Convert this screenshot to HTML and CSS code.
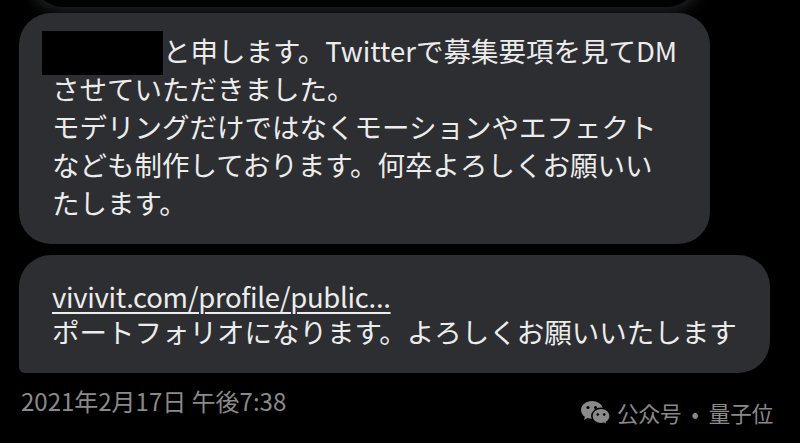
FILE: index.html
```html
<!DOCTYPE html>
<html lang="ja">
<head>
    <meta charset="UTF-8">
    <meta name="viewport" content="width=device-width, initial-scale=1.0">
    <title>DM</title>
    <link rel="stylesheet" href="styles.css">
</head>
<body>

    <div class="chat">
        <!-- tail of the previous message -->
        <div class="prev-bubble"></div>

        <div class="bubble bubble-first">
            <span class="redacted"></span>と申します。Twitterで募集要項を見てDM<br>
            させていただきました。<br>
            モデリングだけではなくモーションやエフェクト<br>
            なども制作しております。何卒よろしくお願いい<br>
            たします。
        </div>

        <div class="bubble bubble-last">
            <span class="link">vivivit.com/profile/public...</span><br>
            ポートフォリオになります。よろしくお願いいたします
        </div>

        <div class="timestamp">2021年2月17日 午後7:38</div>
    </div>

    <!-- watermark -->
    <div class="watermark">
        <svg class="wechat" width="31" height="26" viewBox="0 0 31 26">
            <path d="M12 1C5.9 1 1 5 1 10c0 2.8 1.5 5.2 3.9 6.8L4 20l3.6-1.9c1.4.5 2.9.8 4.4.8 6.1 0 11-4 11-9S18.1 1 12 1z" fill="#8a8a8a"/>
            <circle cx="8" cy="7.5" r="1.5" fill="#000"/>
            <circle cx="15.5" cy="7.5" r="1.5" fill="#000"/>
            <path d="M21 8.2c-5 0-9.2 3.5-9.2 7.8s4.2 7.8 9.2 7.8c1.1 0 2.2-.2 3.2-.5l3 1.6-.7-2.7c2.2-1.4 3.7-3.6 3.7-6.2 0-4.3-4.2-7.8-9.2-7.8z" fill="#8a8a8a" stroke="#000" stroke-width="1.6"/>
            <circle cx="17.8" cy="14.5" r="1.3" fill="#000"/>
            <circle cx="24.2" cy="14.5" r="1.3" fill="#000"/>
        </svg>
        <span>公众号</span><span class="dot">·</span><span>量子位</span>
    </div>

</body>
</html>
```

FILE: styles.css
```css
body {
    font-family: "Noto Sans CJK JP", "Noto Sans", sans-serif;
    margin: 0;
    padding: 0;
    background-color: #000000;
    color: #ececec;
    width: 800px;
    height: 443px;
    overflow: hidden;
    position: relative;
}
.chat {
    display: flex;
    flex-direction: column;
    align-items: flex-start;
    padding-left: 19px;
}
.prev-bubble {
    width: 664px;
    height: 40px;
    margin-top: -33px;
    margin-left: 14px;
    background: #000000;
    border-radius: 0 0 30px 30px;
    box-shadow: 0 0 14px 5px rgba(58, 60, 64, 0.55);
}
.bubble {
    box-sizing: border-box;
    background-color: #2c2e31;
    font-size: 27.5px;
    white-space: nowrap;
    padding-left: 33px;
}
.bubble-first {
    width: 691px;
    height: 231px;
    margin-top: 6px;
    padding-top: 18px;
    line-height: 38px;
    border-radius: 32px;
}
.bubble-last {
    width: 751px;
    height: 118px;
    margin-top: 11px;
    padding-top: 24px;
    line-height: 35px;
    border-radius: 32px 32px 32px 6px;
}
.redacted {
    display: inline-block;
    width: 121px;
    height: 44px;
    margin: -14px 0 -10px -10px;
    background: #000000;
    vertical-align: middle;
}
.link {
    letter-spacing: -0.3px;
    text-decoration: underline;
    text-decoration-thickness: 2px;
    text-underline-offset: 4px;
}
.timestamp {
    margin-top: 13px;
    margin-left: 2px;
    font-size: 24px;
    line-height: 30px;
    color: #8a8a8a;
}
.watermark {
    position: absolute;
    left: 580px;
    top: 397px;
    display: flex;
    align-items: center;
    gap: 6px;
    font-family: "Noto Sans CJK SC", sans-serif;
    font-size: 21.5px;
    color: #8a8a8a;
}
.dot {
    margin: 0 4px;
}
```
